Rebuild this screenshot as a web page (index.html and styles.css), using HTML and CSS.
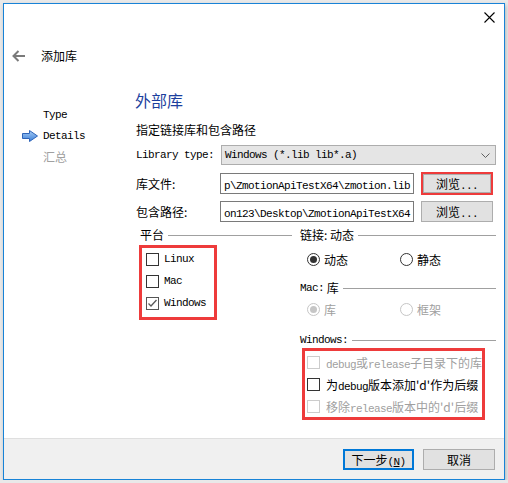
FILE: index.html
```html
<!DOCTYPE html>
<html>
<head>
<meta charset="utf-8">
<link rel="stylesheet" href="styles.css">
</head>
<body>
<div class="window">
  <div class="titlebar">
    <svg class="close" width="11" height="11" viewBox="0 0 11 11"><path d="M0.5 0.5L10.5 10.5M10.5 0.5L0.5 10.5" stroke="#000" stroke-width="1.1" fill="none"/></svg>
  </div>
  <div class="header">
    <svg class="back" width="13" height="12" viewBox="0 0 13 12"><path d="M6.5 1L1.5 6L6.5 11M1.5 6H13" fill="none" stroke="#7a7a7a" stroke-width="2"/></svg>
    <span class="title">添加库</span>
  </div>
  <div class="body">
    <nav class="nav">
      <div class="step"><span class="m">Type</span></div>
      <div class="step current">
        <svg class="arrow" width="16" height="12" viewBox="0 0 16 12">
          <defs><linearGradient id="ag" x1="0" y1="0" x2="0" y2="1"><stop offset="0" stop-color="#a9cdf5"/><stop offset="1" stop-color="#3a7fd8"/></linearGradient></defs>
          <polygon points="0.5,3.5 7.5,3.5 7.5,0.5 15.5,6 7.5,11.5 7.5,8.5 0.5,8.5" fill="url(#ag)" stroke="#2f64b8" stroke-width="1"/>
        </svg>
        <span class="m">Details</span>
      </div>
      <div class="step future">汇总</div>
    </nav>
    <main class="main">
      <h1 class="heading">外部库</h1>
      <p class="subtitle">指定链接库和包含路径</p>
      <div class="form">
        <div class="row">
          <span class="lbl m">Library type:</span>
          <div class="combo"><span class="m">Windows (*.lib lib*.a)</span>
            <svg width="9" height="5" viewBox="0 0 9 5"><path d="M0.5 0.5L4.5 4.5L8.5 0.5" fill="none" stroke="#606060" stroke-width="1"/></svg>
          </div>
        </div>
        <div class="row">
          <span class="lbl">库文件:</span>
          <div class="input"><span class="m">p\ZmotionApiTestX64\zmotion.lib</span></div>
          <button class="btn hl">浏览<span class="m">...</span></button>
        </div>
        <div class="row">
          <span class="lbl">包含路径:</span>
          <div class="input"><span class="m">on123\Desktop\ZmotionApiTestX64</span></div>
          <button class="btn">浏览<span class="m">...</span></button>
        </div>
      </div>
      <div class="groups">
        <section class="group left">
          <div class="gtitle">平台</div>
          <div class="checks">
            <div class="chk"><span class="box"></span><span class="m">Linux</span></div>
            <div class="chk"><span class="box"></span><span class="m">Mac</span></div>
            <div class="chk"><span class="box checked"><svg width="11" height="11" viewBox="0 0 11 11"><path d="M1.5 5.5L4 8L9.5 2" fill="none" stroke="#5a5a5a" stroke-width="1.3"/></svg></span><span class="m">Windows</span></div>
          </div>
        </section>
        <section class="group right">
          <div class="gtitle">链接: 动态</div>
          <div class="radios">
            <div class="radio"><span class="dot on"></span>动态</div>
            <div class="radio"><span class="dot"></span>静态</div>
          </div>
          <div class="gtitle mac"><span class="m">Mac:</span>&nbsp;库</div>
          <div class="radios mac-r">
            <div class="radio disabled"><span class="dot on"></span>库</div>
            <div class="radio disabled"><span class="dot"></span>框架</div>
          </div>
          <div class="gtitle win"><span class="m">Windows:</span></div>
          <div class="wchecks">
            <div class="chk disabled"><span class="box"></span><span><span class="m">debug</span>或<span class="m">release</span>子目录下的库</span></div>
            <div class="chk"><span class="box"></span><span>为<span class="m">debug</span>版本添加'd'作为后缀</span></div>
            <div class="chk disabled"><span class="box"></span><span>移除<span class="m">release</span>版本中的'd'后缀</span></div>
          </div>
        </section>
      </div>
    </main>
  </div>
  <div class="footer">
    <button class="fbtn default">下一步<span class="m">(<u>N</u>)</span></button>
    <button class="fbtn">取消</button>
  </div>
</div>
</body>
</html>
```

FILE: styles.css
```css
body {
  margin: 0;
  background: #e9e9e9;
  font-family: "Noto Sans CJK SC", sans-serif;
  font-size: 12px;
  color: #000;
}
.m {
  font-family: "Liberation Mono", "Noto Sans CJK SC", monospace;
  font-size: 11px;
  letter-spacing: -0.6px;
}
.window {
  box-sizing: border-box;
  width: 502px;
  height: 477px;
  margin: 3px 0 0 3px;
  border: 1px solid #1883d7;
  background: #fff;
  display: flex;
  flex-direction: column;
  box-shadow: 1px 2px 4px rgba(0, 0, 0, 0.22);
}
.titlebar {
  box-sizing: border-box;
  height: 30px;
  display: flex;
  justify-content: flex-end;
  align-items: flex-start;
  padding: 8px 9px 0 0;
}
.header {
  height: 44px;
  display: flex;
  align-items: center;
  padding-left: 8px;
}
.back { margin-right: 16px; }
.title { line-height: 16px; }
.body {
  flex: 1;
  display: flex;
}
.nav {
  width: 113px;
  padding: 26px 0 0 18px;
}
.step {
  height: 21px;
  display: flex;
  align-items: center;
  padding-left: 21px;
}
.step.current { padding-left: 0; }
.step .arrow { margin-right: 5px; }
.step.future { color: #a0a0a0; }
.main {
  flex: 1;
  padding: 11px 8px 0 0;
}
.heading {
  margin: 0;
  font-size: 16px;
  line-height: 22px;
  font-weight: normal;
  color: #1c3f9e;
}
.subtitle {
  margin: 11px 0 0 1px;
  line-height: 16px;
}
.form {
  margin-top: 6px;
  display: flex;
  flex-direction: column;
  gap: 6px;
}
.row {
  display: flex;
  align-items: center;
  height: 22px;
}
.lbl {
  width: 85px;
  padding-left: 1px;
  flex: none;
}
.combo {
  flex: 1;
  height: 20px;
  box-sizing: border-box;
  border: 1px solid #adadad;
  background: #e5e5e5;
  display: flex;
  align-items: center;
  justify-content: space-between;
  padding: 0 5px 0 3px;
}
.input {
  box-sizing: border-box;
  width: 194px;
  height: 21px;
  margin-left: -1px;
  border: 1px solid #7a7a7a;
  padding-left: 3px;
  overflow: hidden;
  white-space: nowrap;
  line-height: 19px;
}
.btn {
  box-sizing: border-box;
  width: 72px;
  height: 21px;
  margin-left: 7px;
  border: 1px solid #adadad;
  background: #e1e1e1;
  font: inherit;
  color: #000;
  padding: 0;
}
.btn.hl {
  height: 23px;
  border: 2px solid #ee3b3b;
  box-shadow: inset 0 0 0 1px #adadad;
}
.groups {
  display: flex;
  gap: 8px;
  margin-top: 5px;
  padding-left: 5px;
}
.group.left { width: 152px; }
.group.right { flex: 1; }
.gtitle {
  display: flex;
  align-items: center;
  height: 16px;
  line-height: 16px;
  white-space: nowrap;
}
.gtitle::after {
  content: "";
  flex: 1;
  height: 1px;
  background: #a0a0a0;
  margin-left: 4px;
}
.checks {
  box-sizing: border-box;
  width: 78px;
  margin: 2px 0 0 -1px;
  border: 3px solid #ee3b3b;
  padding: 0 0 3px 4px;
}
.chk {
  height: 22px;
  display: flex;
  align-items: center;
  gap: 5px;
  white-space: nowrap;
}
.box {
  box-sizing: border-box;
  width: 13px;
  height: 13px;
  border: 1px solid #333;
  background: #fff;
  flex: none;
  display: flex;
  align-items: center;
  justify-content: center;
}
.box.checked { border-color: #555; }
.radios {
  display: flex;
  height: 16px;
  margin-top: 8px;
  padding-left: 7px;
}
.radio {
  width: 93px;
  display: flex;
  align-items: center;
  gap: 4px;
}
.dot {
  box-sizing: border-box;
  width: 13px;
  height: 13px;
  border: 1px solid #333;
  border-radius: 50%;
  display: flex;
  align-items: center;
  justify-content: center;
}
.dot.on::after {
  content: "";
  width: 7px;
  height: 7px;
  border-radius: 50%;
  background: #333;
}
.radio.disabled { color: #a0a0a0; }
.radio.disabled .dot { border-color: #c6c6c6; }
.radio.disabled .dot.on::after { background: #c6c6c6; }
.gtitle.mac { margin-top: 13px; }
.radios.mac-r { margin-top: 5px; }
.gtitle.win { margin-top: 15px; }
.wchecks {
  box-sizing: border-box;
  width: 183px;
  margin-left: 2px;
  border: 3px solid #ee3b3b;
  padding: 0 0 0 2px;
}
.wchecks .chk { gap: 6px; }
.chk.disabled { color: #a0a0a0; }
.chk.disabled .box { border-color: #cccccc; }
.footer {
  height: 40px;
  border-top: 1px solid #dfdfdf;
  background: #f0f0f0;
  display: flex;
  justify-content: flex-end;
  align-items: center;
  gap: 9px;
  padding-right: 9px;
}
.fbtn {
  box-sizing: border-box;
  width: 72px;
  height: 21px;
  border: 1px solid #adadad;
  background: #e1e1e1;
  font: inherit;
  color: #000;
  padding: 0;
}
.fbtn.default {
  width: 71px;
  border: 2px solid #0078d7;
}
```
